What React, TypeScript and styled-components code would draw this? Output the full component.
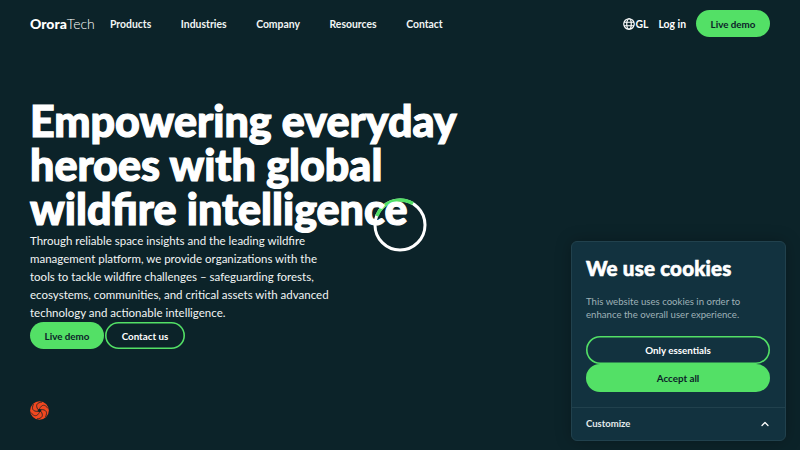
import React from "react";
import styled, { createGlobalStyle } from "styled-components";
import { ChevronUp } from "lucide-react";

const GlobalStyle = createGlobalStyle`
  html, body {
    margin: 0;
    padding: 0;
    background: #0c2329;
    overflow: hidden;
  }
  * {
    box-sizing: border-box;
  }
`;

const Page = styled.div`
  position: relative;
  width: 800px;
  height: 450px;
  overflow: hidden;
  background: #0c2329;
  color: #fff;
  font-family: "Lato", "Liberation Sans", sans-serif;
`;

const Header = styled.header`
  display: flex;
  align-items: center;
  justify-content: space-between;
  height: 47px;
  padding: 0 30px;
`;

const HeaderLeft = styled.div`
  display: flex;
  align-items: center;
`;

const Logo = styled.div`
  width: 80px;
  font-size: 14px;
  font-weight: 300;
  b {
    font-weight: 900;
  }
`;

const Nav = styled.nav`
  display: flex;
  gap: 29.6px;
`;

const NavLink = styled.a`
  font-size: 10.4px;
  font-weight: 700;
  color: #f2f5f5;
`;

const HeaderRight = styled.div`
  display: flex;
  align-items: center;
`;

const Locale = styled.div`
  display: flex;
  align-items: center;
  font-size: 10.4px;
  font-weight: 700;
  margin-right: 10px;
`;

const Login = styled.a`
  font-size: 10.4px;
  font-weight: 700;
  margin-right: 10px;
`;

const Button = styled.button<{ $outline?: boolean; $wide?: boolean; $w?: number }>`
  display: block;
  height: ${(p) => (p.$wide ? "28px" : "27px")};
  width: ${(p) => (p.$wide ? "184px" : `${p.$w}px`)};
  border-radius: 14px;
  border: none;
  box-shadow: ${(p) => (p.$outline ? "inset 0 0 0 1.6px #53e066" : "none")};
  background: ${(p) => (p.$outline ? "transparent" : "#53e066")};
  color: ${(p) => (p.$outline ? "#fff" : "#0c2329")};
  font-family: "Lato", sans-serif;
  font-size: 9.8px;
  font-weight: 700;
  padding: 0;
`;

const Hero = styled.section`
  position: relative;
  padding: 52px 30px 0;
`;

const Title = styled.h1`
  position: relative;
  z-index: 1;
  margin: 0 0 1px;
  width: 460px;
  font-size: 43px;
  line-height: 44px;
  font-weight: 900;
  -webkit-text-stroke: 1.2px #fff;
`;

const Lead = styled.p`
  margin: 0;
  width: 305px;
  font-size: 11.5px;
  line-height: 18px;
  color: #f2f5f5;
`;

const Actions = styled.div`
  display: flex;
  gap: 1px;
`;

const Spinner = styled.svg`
  position: absolute;
  left: 372px;
  top: 197px;
`;

const Mark = styled.svg`
  position: absolute;
  left: 30px;
  top: 401px;
`;

const CookieCard = styled.aside`
  position: absolute;
  left: 571px;
  top: 241px;
  width: 215px;
  height: 200px;
  background: #12323f;
  border: 1px solid #21414d;
  border-radius: 6px;
  box-shadow: 0 0 16px rgba(0, 0, 0, 0.25);
`;

const CookieBody = styled.div`
  padding: 14px 14px 15px;
  height: 166px;
  border-bottom: 1px solid #21414d;
`;

const CookieTitle = styled.h2`
  margin: 0;
  font-size: 20.5px;
  line-height: 24px;
  font-weight: 900;
  letter-spacing: 0.2px;
  -webkit-text-stroke: 0.6px #fff;
`;

const CookieText = styled.p`
  margin: 15px 0 15px;
  font-size: 9.6px;
  line-height: 13px;
  color: #9fb1b7;
`;

const CookieFoot = styled.div`
  display: flex;
  align-items: center;
  justify-content: space-between;
  height: 33px;
  padding: 0 14px 2px;
  font-size: 9.5px;
  font-weight: 700;
  color: #e4eaeb;
`;

const App = () => {
  return (
    <Page>
      <GlobalStyle />
      <Header>
        <HeaderLeft>
          <Logo>
            <b>Orora</b>Tech
          </Logo>
          <Nav>
            <NavLink>Products</NavLink>
            <NavLink>Industries</NavLink>
            <NavLink>Company</NavLink>
            <NavLink>Resources</NavLink>
            <NavLink>Contact</NavLink>
          </Nav>
        </HeaderLeft>
        <HeaderRight>
          <Locale>
            <svg width="12" height="12" viewBox="0 0 24 24" fill="none" stroke="#fff" strokeWidth="2.4">
              <circle cx="12" cy="12" r="10.5" />
              <ellipse cx="12" cy="12" rx="4.5" ry="10.5" />
              <path d="M2 8.5h20M2 15.5h20" />
            </svg>
            GL
          </Locale>
          <Login>Log in</Login>
          <Button $w={74}>Live demo</Button>
        </HeaderRight>
      </Header>
      <Hero>
        <Title>
          Empowering everyday heroes with global wildfire intelligence
        </Title>
        <Lead>
          Through reliable space insights and the leading wildfire management
          platform, we provide organizations with the tools to tackle wildfire
          challenges – safeguarding forests, ecosystems, communities, and
          critical assets with advanced technology and actionable intelligence.
        </Lead>
        <Actions>
          <Button $w={74}>Live demo</Button>
          <Button $outline $w={80}>Contact us</Button>
        </Actions>
      </Hero>
      <Spinner width="56" height="56" viewBox="0 0 56 56" fill="none">
        <circle cx="28" cy="28" r="25" stroke="#fff" strokeWidth="3" />
        <path d="M4.8 19 A25 25 0 0 1 41 6.6" stroke="#53e066" strokeWidth="3.5" />
      </Spinner>
      <Mark width="19" height="19" viewBox="0 0 24 24">
        <circle cx="12" cy="12" r="11.8" fill="#f1471f" />
        <circle cx="12" cy="12" r="2.2" fill="#0c2329" />
        <g stroke="#0c2329" strokeWidth="0.9" fill="none">
          {[0, 60, 120, 180, 240, 300].map((deg) => (
            <path key={deg} d="M12 9.8C15 4 19 4 22.8 9.5" transform={`rotate(${deg} 12 12)`} />
          ))}
        </g>
      </Mark>
      <CookieCard>
        <CookieBody>
          <CookieTitle>We use cookies</CookieTitle>
          <CookieText>
            This website uses cookies in order to
            <br />
            enhance the overall user experience.
          </CookieText>
          <Button $outline $wide>Only essentials</Button>
          <Button $wide>Accept all</Button>
        </CookieBody>
        <CookieFoot>
          Customize
          <ChevronUp size={12} color="#fff" strokeWidth={2.5} />
        </CookieFoot>
      </CookieCard>
    </Page>
  );
};

export default App;
